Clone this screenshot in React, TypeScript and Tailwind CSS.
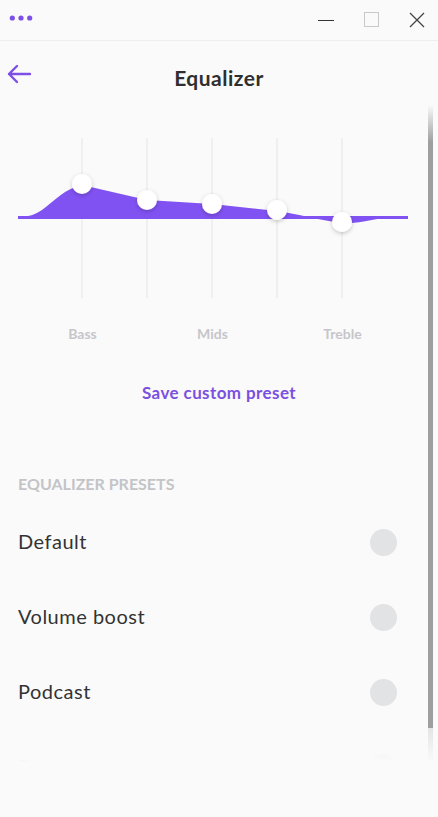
const BANDS = [
  { x: 64, y: 54 },
  { x: 129, y: 70 },
  { x: 194, y: 74 },
  { x: 259, y: 80 },
  { x: 324, y: 92 },
];

const PRESETS = ["Default", "Volume boost", "Podcast", "Bass boost"];

function TitleBar() {
  return (
    <div className="h-[41px] shrink-0 border-b border-[#eeeeee] flex items-center relative">
      <svg width="30" height="8" viewBox="0 0 30 8" className="absolute left-[9px] top-[14px]">
        <circle cx="3.3" cy="4" r="2.6" fill="#7d4fe6" />
        <circle cx="12" cy="4" r="2.6" fill="#7d4fe6" />
        <circle cx="20.7" cy="4" r="2.6" fill="#7d4fe6" />
      </svg>
      <div className="absolute left-[318px] top-[20px] w-[16px] h-px bg-[#333333]" />
      <div className="absolute left-[364px] top-[12px] w-[15px] h-[15px] border border-[#c9c9c9]" />
      <svg width="16" height="16" viewBox="0 0 16 16" className="absolute left-[409px] top-[12px]">
        <path d="M1 1 L15 15 M15 1 L1 15" stroke="#444444" strokeWidth="1.3" fill="none" />
      </svg>
    </div>
  );
}

function Chart() {
  const top =
    "M0 87 C10 87 16 85 24 80 C36 71 48 58 64 55 L129 70 L194 74 L259 81 C280 84 300 90 324 93 C340 94 355 89 372 87 L390 87 L0 87 Z";
  return (
    <svg width="390" height="175" viewBox="0 0 390 175" className="block">
      <defs>
        <filter id="knob" x="-60%" y="-60%" width="220%" height="220%">
          <feDropShadow dx="0" dy="1.5" stdDeviation="2" floodColor="#000000" floodOpacity="0.22" />
        </filter>
      </defs>
      {BANDS.map((b) => (
        <line key={b.x} x1={b.x} y1="8" x2={b.x} y2="168" stroke="#e5e5e7" strokeWidth="1" />
      ))}
      <path d={top} fill="#8152f2" />
      <rect x="0" y="86" width="390" height="3" fill="#8152f2" />
      {BANDS.map((b) => (
        <circle key={b.x} cx={b.x} cy={b.y} r="10" fill="#ffffff" filter="url(#knob)" />
      ))}
    </svg>
  );
}

export default function App() {
  return (
    <div className="w-[438px] h-[817px] bg-[#fafafa] flex flex-col overflow-hidden font-['Lato',sans-serif]">
      <TitleBar />

      <div className="h-[64px] shrink-0 relative flex items-center justify-center">
        <svg width="26" height="22" viewBox="0 0 26 22" className="absolute left-[6px] top-[22px]">
          <path
            d="M24 11 H3 M11 3 L3 11 L11 19"
            stroke="#7d4fe6"
            strokeWidth="2.4"
            strokeLinecap="round"
            strokeLinejoin="round"
            fill="none"
          />
        </svg>
        <h1 className="mt-[10px] text-[21px] font-bold text-[#2f2f2f] tracking-[0.5px]">Equalizer</h1>
      </div>

      <div className="relative h-[662px] shrink-0 overflow-hidden">
        <div className="px-[18px] pt-[25px]">
          <Chart />
          <div className="mt-[19px] pl-[32px] grid grid-cols-[65px_65px_65px_65px_65px] text-[14px] font-bold text-[#c6c6ca] leading-5 text-center">
            <span>Bass</span>
            <span />
            <span>Mids</span>
            <span />
            <span>Treble</span>
          </div>
        </div>

        <div className="mt-[37px] text-center text-[17px] leading-6 font-bold text-[#7b50df] tracking-[0.4px]">
          Save custom preset
        </div>

        <div className="mt-[69px] px-[18px] text-[16px] leading-5 font-bold text-[#c4c4c7] uppercase">
          Equalizer presets
        </div>

        <div className="mt-[11px]">
          {PRESETS.map((p) => (
            <div key={p} className="h-[75px] pl-[18px] pr-[41px] flex items-center justify-between">
              <span className="text-[20px] text-[#333333] tracking-[0.5px] -mt-[3px]">{p}</span>
              <span className="w-[27px] h-[27px] rounded-full bg-[#e2e3e5]" />
            </div>
          ))}
        </div>

        <div className="absolute left-0 right-0 bottom-0 h-[56px] bg-gradient-to-b from-[#fafafa00] to-[#fafafa] to-[90%]" />

        <div className="absolute right-[5px] top-0 w-[5px] h-[623px] bg-gradient-to-b from-[#9e9e9e00] to-[#9e9e9e] to-[6%]" />
        <div className="absolute right-[5px] top-[623px] w-[5px] h-[34px] bg-gradient-to-b from-[#e4e4e4] to-[#fafafa]" />
      </div>
    </div>
  );
}
